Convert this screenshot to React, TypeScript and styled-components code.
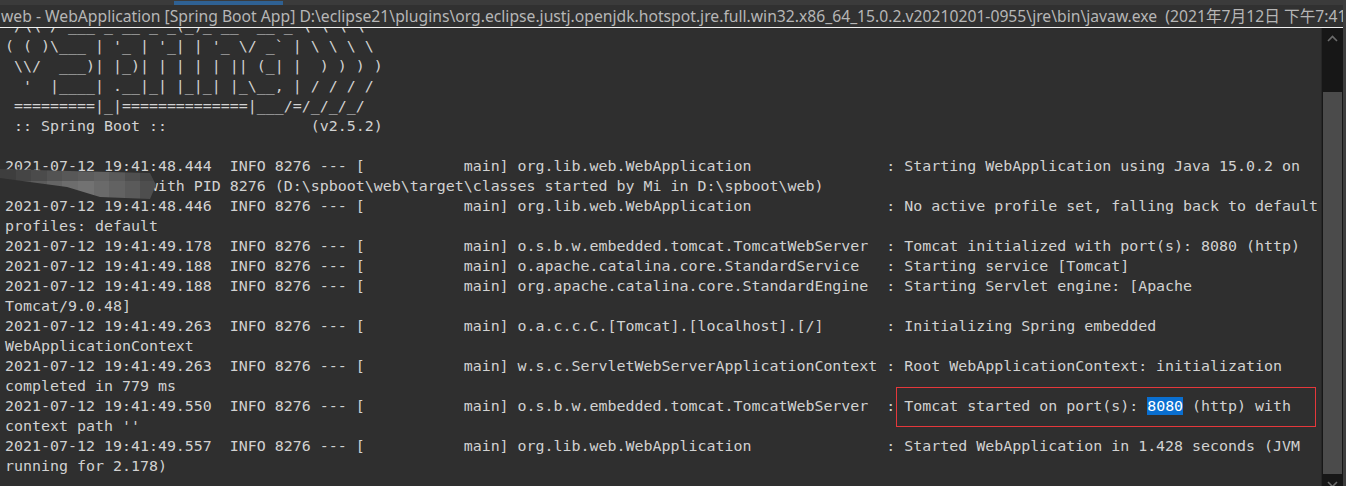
import React from "react";
import styled, { createGlobalStyle } from "styled-components";

const Global = createGlobalStyle`
  html, body { margin: 0; padding: 0; background: #2f2f2f; }
  body { width: 1346px; height: 486px; overflow: hidden; }
`;

const Window = styled.div`
  width: 1346px;
  height: 486px;
  display: flex;
  flex-direction: row;
  background: #2f2f2f;
  overflow: hidden;
`;

const Main = styled.div`
  flex: 1;
  min-width: 0;
  display: flex;
  flex-direction: column;
`;

const Frame = styled.div`
  width: 3px;
  background: #3d3d3d;
`;

const TabStrip = styled.div`
  height: 5px;
  background: #3b3b3b;
  display: flex;
  align-items: flex-end;
  padding-left: 174px;
`;

const ActiveTab = styled.div`
  width: 109px;
  height: 4px;
  background: #2f6193;
`;

const TitleBar = styled.div`
  height: 22px;
  background: #313131;
  color: #b6b6b6;
  font-family: "Noto Sans", "Noto Sans CJK SC", sans-serif;
  font-size: 15.7px;
  line-height: 22px;
  white-space: pre;
  overflow: hidden;
  padding-left: 1px;
`;

const Rule = styled.div`
  height: 1px;
  background: #f0f0f0;
`;

const Body = styled.div`
  flex: 1;
  min-height: 0;
  display: flex;
  flex-direction: row;
`;

const Console = styled.div`
  position: relative;
  flex: 1;
  min-width: 0;
  overflow: hidden;
  background: #2f2f2f;
  border-right: 1px solid #262626;
`;

const Lines = styled.div`
  margin-top: -12px;
  padding-left: 5px;
  font-family: "DejaVu Sans Mono", "Liberation Mono", monospace;
  font-size: 14.95px;
  line-height: 20px;
  color: #d2d2d2;
`;

const Line = styled.div`
  height: 20px;
  white-space: pre;
`;

const Selected = styled.span`
  background: #0a6fd0;
  color: #ffffff;
`;

const RedBox = styled.div`
  position: absolute;
  left: 896px;
  top: 359px;
  width: 420px;
  height: 40px;
  box-sizing: border-box;
  border: 1px solid #e5383b;
  pointer-events: none;
`;

const Smudge = styled.div`
  position: absolute;
  left: 0;
  top: 139px;
  width: 156px;
  height: 33px;
  display: grid;
  grid-template-columns: repeat(10, 1fr);
  grid-template-rows: 14px 19px;
  clip-path: polygon(0 2px, 70px 4px, 150px 6px, 156px 18px, 150px 32px, 100px 30px, 67px 20px, 0 11px);
`;

const Cell = styled.div<{ $shade: string }>`
  background: ${(p) => p.$shade};
`;

const ScrollBar = styled.div`
  width: 21px;
  background: #171717;
  display: flex;
  flex-direction: column;
  box-sizing: border-box;
  padding: 0 1px 0 1px;
`;

const ArrowZone = styled.div<{ $h: number }>`
  height: ${(p) => p.$h}px;
  flex: none;
  display: flex;
  justify-content: center;
  padding-top: 7px;
  box-sizing: border-box;
`;

const Thumb = styled.div`
  height: 382px;
  flex: none;
  background: #4b4b4b;
`;

const Chevron = ({ down }: { down?: boolean }) => (
  <svg width="11" height="7" viewBox="0 0 11 7">
    <polyline
      points={down ? "1,1 5.5,5.5 10,1" : "1,6 5.5,1.5 10,6"}
      fill="none"
      stroke="#6c6c6c"
      strokeWidth="1.6"
    />
  </svg>
);

const H = "2021-07-12 19:41:";
const T = "  INFO 8276 --- [           main] ";

const shadesA = ["#3e3e3e", "#454545", "#4b4b4b", "#535353", "#585858", "#5d5d5d", "#626262", "#5a5a5a", "#4f4f4f", "#464646"];
const shadesB = ["#4a4a4a", "#545454", "#5c5c5c", "#656565", "#6d6d6d", "#727272", "#6a6a6a", "#626262", "#5a5a5a", "#4e4e4e"];

const banner = [
  " /\\\\ / ___'_ __ _ _(_)_ __  __ _ \\ \\ \\ \\",
  "( ( )\\___ | '_ | '_| | '_ \\/ _` | \\ \\ \\ \\",
  " \\\\/  ___)| |_)| | | | | || (_| |  ) ) ) )",
  "  '  |____| .__|_| |_|_| |_\\__, | / / / /",
  " =========|_|==============|___/=/_/_/_/",
  " :: Spring Boot ::                (v2.5.2)",
  "",
];

export default function App() {
  return (
    <>
      <Global />
      <Window>
        <Main>
          <TabStrip>
            <ActiveTab />
          </TabStrip>
          <TitleBar>
            {"web - WebApplication [Spring Boot App] D:\\eclipse21\\plugins\\org.eclipse.justj.openjdk.hotspot.jre.full.win32.x86_64_15.0.2.v20210201-0955\\jre\\bin\\javaw.exe  (2021年7月12日 下午7:41:48)"}
          </TitleBar>
          <Rule />
          <Body>
            <Console>
              <Lines>
                {banner.map((b, i) => (
                  <Line key={"b" + i}>{b}</Line>
                ))}
                <Line>{H + "48.444" + T + "org.lib.web.WebApplication               : Starting WebApplication using Java 15.0.2 on"}</Line>
                <Line>{"                with PID 8276 (D:\\spboot\\web\\target\\classes started by Mi in D:\\spboot\\web)"}</Line>
                <Line>{H + "48.446" + T + "org.lib.web.WebApplication               : No active profile set, falling back to default"}</Line>
                <Line>{"profiles: default"}</Line>
                <Line>{H + "49.178" + T + "o.s.b.w.embedded.tomcat.TomcatWebServer  : Tomcat initialized with port(s): 8080 (http)"}</Line>
                <Line>{H + "49.188" + T + "o.apache.catalina.core.StandardService   : Starting service [Tomcat]"}</Line>
                <Line>{H + "49.188" + T + "org.apache.catalina.core.StandardEngine  : Starting Servlet engine: [Apache"}</Line>
                <Line>{"Tomcat/9.0.48]"}</Line>
                <Line>{H + "49.263" + T + "o.a.c.c.C.[Tomcat].[localhost].[/]       : Initializing Spring embedded"}</Line>
                <Line>{"WebApplicationContext"}</Line>
                <Line>{H + "49.263" + T + "w.s.c.ServletWebServerApplicationContext : Root WebApplicationContext: initialization"}</Line>
                <Line>{"completed in 779 ms"}</Line>
                <Line>
                  {H + "49.550" + T + "o.s.b.w.embedded.tomcat.TomcatWebServer  : Tomcat started on port(s): "}
                  <Selected>8080</Selected>
                  {" (http) with"}
                </Line>
                <Line>{"context path ''"}</Line>
                <Line>{H + "49.557" + T + "org.lib.web.WebApplication               : Started WebApplication in 1.428 seconds (JVM"}</Line>
                <Line>{"running for 2.178)"}</Line>
                <Line>{""}</Line>
              </Lines>
              <Smudge>
                {shadesA.map((s, i) => (
                  <Cell key={"a" + i} $shade={s} />
                ))}
                {shadesB.map((s, i) => (
                  <Cell key={"c" + i} $shade={s} />
                ))}
              </Smudge>
              <RedBox />
            </Console>
            <ScrollBar>
              <ArrowZone $h={64}>
                <Chevron />
              </ArrowZone>
              <Thumb />
              <ArrowZone $h={12}>
                <Chevron down />
              </ArrowZone>
            </ScrollBar>
          </Body>
        </Main>
        <Frame />
      </Window>
    </>
  );
}
